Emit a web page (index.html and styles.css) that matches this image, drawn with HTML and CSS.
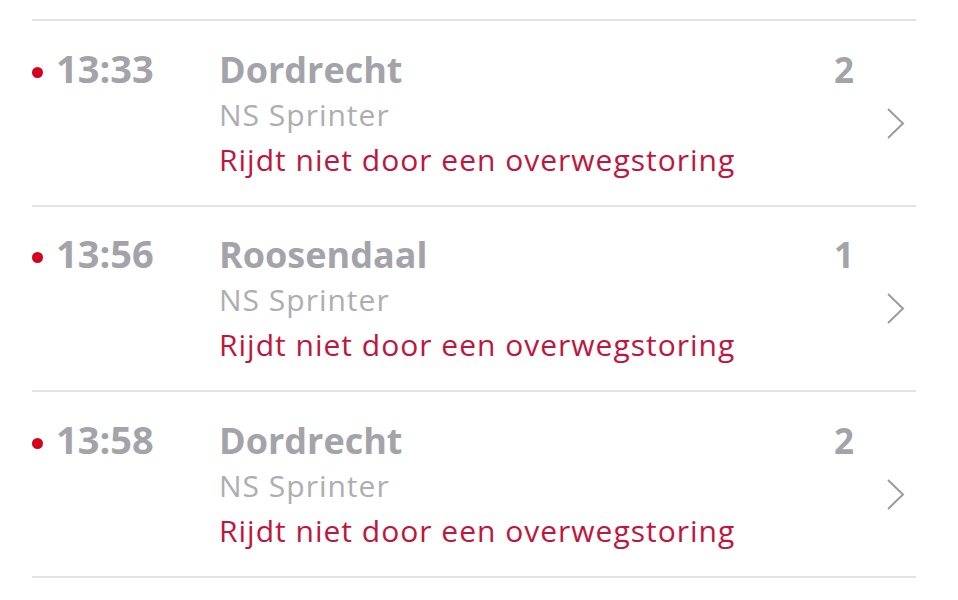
FILE: index.html
```html
<!DOCTYPE html>
<html lang="nl">
<head>
<meta charset="utf-8">
<link rel="stylesheet" href="styles.css">
</head>
<body>
<ul class="departures">
  <li class="row">
    <div class="time"><span class="dot"></span>13:33</div>
    <div class="info">
      <div class="dest">Dordrecht</div>
      <div class="type">NS Sprinter</div>
      <div class="notice">Rijdt niet door een overwegstoring</div>
    </div>
    <div class="platform">2</div>
    <div class="chev"><svg width="20" height="32" viewBox="0 0 20 32"><path d="M2 1 L17 15.5 L2 30" fill="none" stroke="#9b9ba0" stroke-width="2"/></svg></div>
  </li>
  <li class="row">
    <div class="time"><span class="dot"></span>13:56</div>
    <div class="info">
      <div class="dest">Roosendaal</div>
      <div class="type">NS Sprinter</div>
      <div class="notice">Rijdt niet door een overwegstoring</div>
    </div>
    <div class="platform">1</div>
    <div class="chev"><svg width="20" height="32" viewBox="0 0 20 32"><path d="M2 1 L17 15.5 L2 30" fill="none" stroke="#9b9ba0" stroke-width="2"/></svg></div>
  </li>
  <li class="row">
    <div class="time"><span class="dot"></span>13:58</div>
    <div class="info">
      <div class="dest">Dordrecht</div>
      <div class="type">NS Sprinter</div>
      <div class="notice">Rijdt niet door een overwegstoring</div>
    </div>
    <div class="platform">2</div>
    <div class="chev"><svg width="20" height="32" viewBox="0 0 20 32"><path d="M2 1 L17 15.5 L2 30" fill="none" stroke="#9b9ba0" stroke-width="2"/></svg></div>
  </li>
</ul>
</body>
</html>
```

FILE: styles.css
```css
html, body {
  margin: 0;
  padding: 0;
  background: #ffffff;
}
body {
  font-family: "Open Sans", "Noto Sans", sans-serif;
  padding-top: 19px;
}
.departures {
  list-style: none;
  margin: 0 42px 0 32px;
  padding: 0;
  border-top: 2px solid #e2e2e4;
}
.row {
  display: flex;
  align-items: baseline;
  padding: 24.5px 0 23px;
  border-bottom: 2px solid #e2e2e4;
}
.time {
  width: 187px;
  flex: none;
  font-size: 38px;
  font-weight: 700;
  line-height: 44px;
  color: #a3a3a9;
  white-space: nowrap;
}
.dot {
  display: inline-block;
  width: 11px;
  height: 11px;
  border-radius: 50%;
  background: #d5001f;
  margin-right: 13px;
  vertical-align: 5px;
}
.info {
  flex: 1;
}
.dest {
  font-size: 36px;
  font-weight: 700;
  line-height: 44px;
  color: #a3a3a9;
}
.type {
  font-size: 30px;
  line-height: 45px;
  color: #adadb2;
  letter-spacing: 1px;
}
.notice {
  font-size: 30px;
  line-height: 45px;
  color: #c1153d;
  letter-spacing: 1px;
}
.platform {
  font-size: 35px;
  font-weight: 700;
  line-height: 44px;
  color: #a3a3a9;
  width: 40px;
}
.chev {
  align-self: flex-start;
  width: 32px;
  padding-top: 62px;
  margin-right: 10px;
  display: flex;
  justify-content: flex-end;
}
```
